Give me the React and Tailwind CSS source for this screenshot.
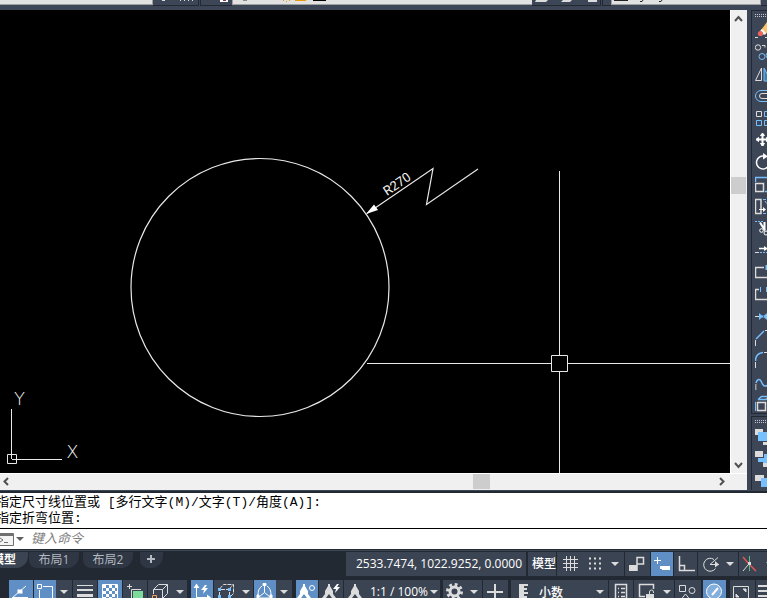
import React from 'react';
import clsx from 'clsx';

const LIGHT = '#dcdcdc';
const BLUE = '#76c0ff';

const Caret = ({ className }) => (
  <svg viewBox="0 0 8 4" className={clsx('h-1 w-2 shrink-0', className)} fill={LIGHT}>
    <path d="M0 0h8L4 4z" />
  </svg>
);

const Grip = () => (
  <svg width="22" height="3" className="ml-[3px] block" fill="#c3c8d0">
    {[0, 2, 4, 6, 8, 10, 12, 14].map(x => (
      <path key={x} d={`M${x} 0h1v1h-1zM${x} 2h1v1h-1z`} />
    ))}
  </svg>
);

const modifyTools = [
  ['删除', <>
    <path d="M0 16.5h3M10 16.5h4" stroke={LIGHT} />
    <path d="M6 9l6-8 5 4-7 9z" fill="#fbc36d" stroke="none" />
    <path d="M5 10l2-2 4 4-2 2z" fill="#fff" stroke="none" />
    <circle cx="5.5" cy="12.5" r="2.6" fill="#f0665c" stroke="none" />
  </>],
  ['复制', <>
    <circle cx="3" cy="4.5" r="2.7" />
    <path d="M7 2.5h3v2M12 2.5h2" />
    <circle cx="7" cy="13.5" r="3" stroke={BLUE} />
    <circle cx="14" cy="12.5" r="3" stroke={BLUE} />
  </>],
  ['镜像', <>
    <path d="M.5 15.5L6.5 3v12.5z" />
    <path d="M9 3v13h7z" stroke={BLUE} fill="#3f7fae" />
  </>],
  ['偏移', <>
    <path d="M20 3.5H6a5.5 5.5 0 000 11h14" stroke={BLUE} />
    <path d="M20 6.5H7a2.5 2.5 0 000 5h13" />
  </>],
  ['阵列', <>
    <path d="M1.5 2.5h5v5h-5z" />
    <path d="M9.5 2.5h5v5h-5zM1.5 11.5h5v5h-5zM9.5 11.5h5v5h-5z" stroke={BLUE} />
  </>],
  ['移动', <g stroke="#fff" fill="#fff">
    <path d="M7.5 3v12M1.5 8.5h12" strokeWidth="2" />
    <path d="M7.5 2l2 2.5h-4zM7.5 15l2-2.5h-4zM1 8.5l2.5-2v4zM14 8.5l-2.5-2v4z" />
  </g>],
  ['旋转', <>
    <path d="M9 3A6.500 6.500 0 1014 12" strokeWidth="1.5" stroke="#fff" />
    <path d="M8 0l5 3.500-5 3z" fill="#fff" stroke="none" />
  </>],
  ['缩放', <>
    <path d="M.5 7V2.500H14M10 16.500h4" stroke={BLUE} strokeWidth="1.5" />
    <path d="M.5 8.500h8v8h-8z" strokeWidth="1.5" />
  </>],
  ['拉伸', <>
    <path d="M.5 2.5h5.500v14H.5z" strokeWidth="1.5" />
    <path d="M8 2.5h6M8 16.5h6M10 4l4 6" stroke={BLUE} strokeDasharray="3 1" />
    <path d="M4 12.5h5" stroke="#fff" />
    <path d="M8 10l3 2.5-3 2.5z" fill="#fff" stroke="none" />
  </>],
  ['修剪', <>
    <path d="M0 2.5h8" stroke={BLUE} strokeDasharray="2 1" />
    <path d="M5 3.5l5 8M9.500 3v8" stroke="#fff" strokeWidth="2" />
    <circle cx="6.500" cy="11.500" r="1.8" stroke="#fff" />
    <circle cx="11" cy="14" r="2" stroke="#fff" />
  </>],
  ['延伸', <>
    <path d="M4 7.5h6" stroke="#fff" strokeWidth="1.5" />
    <path d="M9 5l4 2.5L9 10z" fill="#fff" stroke="none" />
    <path d="M0 11.5h4" />
    <path d="M5 11.5h9" stroke={BLUE} strokeDasharray="2 1" />
  </>],
  ['打断于点', <>
    <path d="M9 4.5H.5v10H14" strokeWidth="1.5" />
    <path d="M11.5 2v5" stroke={BLUE} strokeWidth="2" />
  </>],
  ['打断', <>
    <path d="M4 4.5H.5v10H14" strokeWidth="1.5" />
    <path d="M5.5 2v5M11.5 2v5" stroke={BLUE} />
  </>],
  ['合并', <>
    <path d="M0 9.5h4" />
    <path d="M4 6l4 3.5L4 13zM12 6L8 9.5l4 3.500zM7 8.500h2v2H7z" fill={BLUE} stroke="none" />
  </>],
  ['倒角', <>
    <path d="M.5 17v-6M10 1.5h4" />
    <path d="M1 10l8-8" stroke={BLUE} strokeWidth="1.5" />
  </>],
  ['圆角', <>
    <path d="M.5 17v-6M9 1.5h5" />
    <path d="M.5 10C.5 5 3 2 8 1.5" stroke={BLUE} strokeWidth="1.5" />
  </>],
  ['光顺曲线', <>
    <path d="M.5 17v-6" strokeWidth="2" stroke="#9aa1ab" />
    <path d="M1 10c1-4 4-5 5.5-1s3 5 7 3" stroke={BLUE} strokeWidth="1.5" />
  </>],
  ['分解', <>
    <path d="M.5 7v9" stroke={BLUE} />
    <path d="M3 4.5L6.5 1.5H15M3 4.5h8l3-3" stroke={BLUE} strokeWidth="1.5" />
    <path d="M2.5 7.5h8v8h-8z" strokeWidth="1.5" />
  </>],
];

const orderTools = [
  ['前置', <g stroke="none">
    <path d="M0 2h8v6H0zM8 15h6v3H8z" fill={LIGHT} />
    <path d="M3 5h12v9H3z" fill={BLUE} />
  </g>],
  ['后置', <g stroke="none">
    <path d="M0 2h8v6H0z" fill={LIGHT} />
    <path d="M3 9h6V5h6v13H8v-5H3z" fill={BLUE} />
    <path d="M8 14h6v4H8z" fill={LIGHT} />
  </g>],
  ['置于对象之上', <g stroke="none">
    <path d="M0 4h9v6H0z" fill={LIGHT} />
    <path d="M6 7h9v9H6z" fill={BLUE} />
  </g>],
];

const ToolColumn = ({ tools, className }) => (
  <div className={clsx('overflow-hidden border-l border-t border-[#222933] pt-[3px]', className)}>
    <Grip />
    <div className="mt-[4px] ml-[3px] flex flex-col">
      {tools.map(([name, art]) => (
        <button key={name} aria-label={name} className="h-[22px] w-[22px]">
          <svg width="22" height="22" className="block" fill="none" stroke={LIGHT}>{art}</svg>
        </button>
      ))}
    </div>
  </div>
);

const TopStrip = () => (
  <div className="flex h-[10px] shrink-0 items-start overflow-hidden bg-[#3d4656]">
    <div className="h-[5px] w-[153px] shrink-0 border-r border-b border-[#a0a0a0] bg-[#e1e1e1]" />
    <div className="h-[6px] w-[46px] shrink-0 border-r border-b border-[#222933]">
      <svg width="45" height="5" fill={LIGHT} className="block">
        <path d="M9 0h3v1H9zM27 0h1v1h-1zM31 0h1v1h-1zM35 0h1v1h-1zM39 0h1v1h-1z" />
      </svg>
    </div>
    <div className="ml-px h-[6px] w-[32px] shrink-0 border-b border-l border-[#222933]">
      <svg width="31" height="5" className="block">
        <path d="M19 0h8v2h-8z" fill="#fff" />
        <path d="M22 0h3v1h-3z" fill="#7a3f57" />
      </svg>
    </div>
    <div className="h-[5px] min-w-0 flex-1 border-b border-l border-[#a0a0a0] bg-[#e1e1e1]">
      <svg width="100" height="4" className="block">
        <path d="M10 0h4v1h-4z" fill="#8a8a8a" />
        <path d="M50 0h1v1h-1zM53 1h1v1h-1zM56 0h1v1h-1zM62 0h11v1H62z" fill="#e89a0c" />
        <path d="M80 0h13v1H80z" fill="#000" />
      </svg>
    </div>
    <div className="h-[6px] w-[69px] shrink-0 border-r border-b border-[#222933]">
      <svg width="68" height="5" className="block" fill={LIGHT}>
        <path d="M4 0h12l-2 2H3zM31 0h9l-2 2h-9zM56 0h9v2h-9z" />
      </svg>
    </div>
    <div className="ml-px h-[6px] w-[9px] shrink-0 border-b border-l border-[#222933]" />
    <div className="h-[5px] w-[150px] shrink-0 border-x border-b border-[#a0a0a0] bg-[#e1e1e1]">
      <svg width="80" height="4" className="block" stroke="#222">
        <path d="M2 .5h14M28 1.5h2l1-1.5M47 1.5h2l1-1.5" fill="none" />
      </svg>
    </div>
    <div className="h-[6px] w-[6px] shrink-0 border-b border-[#222933]" />
  </div>
);

const Drawing = () => (
  <div className="min-w-0 flex-1 overflow-hidden bg-black">
    <svg width="730" height="463" viewBox="0 10 730 463" fill="none" stroke="#e8e8e8" className="block">
      <circle cx="260" cy="287.5" r="129" strokeWidth="1.2" />
      <path d="M367 213.5L433 168.5 426.5 204.5 478 169" strokeWidth="1.2" />
      <path d="M366 214L374 204.5 378 210z" fill="#fff" stroke="none" />
      <text x="387" y="196" transform="rotate(-34 387 196)" fill="#f4f4f4" stroke="none" fontSize="13" className="font-['Roboto']">R270</text>
      <path d="M559.5 171v184M559.5 372v101M367 363.5h184M568 363.5h162M551.5 355.5h16v16h-16z" />
      <path d="M11.5 409v50M12 459.5h50M7.5 454.5h9v9h-9z" />
      <g fill="#f4f4f4" stroke="none" fontSize="18" className="font-['DejaVu_Sans'] font-extralight">
        <text x="19.5" y="405" textAnchor="middle">Y</text>
        <text x="72.5" y="458" textAnchor="middle">X</text>
      </g>
    </svg>
  </div>
);

const Chevron = ({ d }) => (
  <svg width="17" height="17" className="block" fill="none" stroke="#505050" strokeWidth="2">
    <path d={d} />
  </svg>
);

const Workspace = () => (
  <div className="flex min-h-0 flex-1 bg-[#3d4656]">
    <div className="flex min-w-0 flex-1 flex-col">
      <div className="flex min-h-0 flex-1">
        <Drawing />
        <div className="flex w-[17px] flex-col border-l border-white bg-[#f0f0f0]">
          <button aria-label="向上滚动" className="-ml-px"><Chevron d="M5 11l3.5-4 3.5 4" /></button>
          <div className="flex flex-1 flex-col">
            <div className="flex-[150]" />
            <div className="h-[17px] w-[15px] bg-[#cdcdcd]" />
            <div className="flex-[262]" />
          </div>
          <button aria-label="向下滚动" className="-ml-px"><Chevron d="M5 7l3.5 4 3.5-4" /></button>
        </div>
      </div>
      <div className="flex h-[17px] border-t border-white bg-[#f0f0f0] pr-[17px]">
        <button aria-label="向左滚动" className="-ml-[2px]"><Chevron d="M10 4L6.5 7.5 10 11" /></button>
        <div className="flex flex-1">
          <div className="flex-[458]" />
          <div className="h-[15px] w-[17px] bg-[#cdcdcd]" />
          <div className="flex-[223]" />
        </div>
        <button aria-label="向右滚动"><Chevron d="M7 4l3.5 3.5L7 11" /></button>
      </div>
    </div>
    <div className="flex w-5 shrink-0 flex-col pl-1">
      <ToolColumn tools={modifyTools} className="h-[404px] border-b" />
      <ToolColumn tools={orderTools} className="mt-[2px] flex-1" />
    </div>
  </div>
);

const CommandLine = () => (
  <div className="shrink-0 border-t border-[#3d4656] bg-white">
    <div className="h-[37px] overflow-hidden border-t-2 border-[#222933] pt-[2px] font-['Liberation_Mono','Noto_Sans_CJK_SC',monospace] text-[13px] leading-4 whitespace-pre text-black">
      <p className="-ml-1">指定尺寸线位置或 [多行文字(M)/文字(T)/角度(A)]:</p>
      <p className="-ml-1">指定折弯位置:</p>
    </div>
    <label className="flex h-[21px] items-center border-t border-black">
      <svg width="14" height="13" className="shrink-0" fill="none" stroke="#707070">
        <path d="M0 .5h13.5v12H0" fill="#f4f4f4" />
        <path d="M0 2h13" strokeWidth="2" />
        <path d="M0 5l3 2-3 2M4 9.5h4" />
      </svg>
      <svg width="8" height="4" className="ml-[2px] shrink-0" fill="#606060"><path d="M0 0h8L4 4z" /></svg>
      <input
        aria-label="命令"
        placeholder="键入命令"
        className="ml-[7px] h-[18px] min-w-0 flex-1 bg-transparent pb-[2px] font-['Noto_Sans_CJK_SC',sans-serif] text-[13px] italic outline-none placeholder:text-[#808080]"
      />
    </label>
  </div>
);

const Icon = ({ w = 22, children, className }) => (
  <svg width={w} height="24" className={clsx('block shrink-0', className)} fill="none" stroke={LIGHT}>
    {children}
  </svg>
);

const Btn = ({ label, on, className, children }) => (
  <button
    aria-label={label}
    aria-pressed={!!on}
    className={clsx('flex h-6 shrink-0 items-start', on ? 'bg-[#5f8fc4]' : 'bg-[#3b4453]', className)}
  >
    {children}
  </button>
);

// toggle with its own drop-down arrow
const SplitBtn = ({ label, on, className, children }) => (
  <Btn label={label} className={className}>
    <span className={clsx('h-6', on && 'bg-[#5f8fc4]')}>{children}</span>
    <Caret className="mx-auto mt-[10px]" />
  </Btn>
);

const TabsAndCoords = () => (
  <div className="flex h-6 items-start font-['Open_Sans','Noto_Sans_CJK_SC',sans-serif] text-xs">
    <nav className="flex min-w-0 flex-1 items-start overflow-hidden leading-4 text-[#b4b9c1]">
      <button className="-ml-2 h-4 w-9 rounded-br-xl bg-[#3b4453] text-left font-bold text-white">模型</button>
      <button className="ml-px h-4 w-[50px] rounded-b-lg rounded-br-xl bg-[#2f3744]">布局1</button>
      <button className="ml-1 h-4 w-[50px] rounded-b-lg rounded-br-xl bg-[#2f3744]">布局2</button>
      <button aria-label="新建布局" className="ml-[7px] h-4 w-[23px] rounded-b-lg rounded-br-xl bg-[#2f3744]">
        <svg width="22" height="16" className="block" stroke="#b4b9c1" strokeWidth="2"><path d="M7 7h8M11 3v8" /></svg>
      </button>
    </nav>
    <div className="flex shrink-0 gap-px">
      <output className="mr-px h-6 w-[180px] bg-[#3b4453] pr-1 text-right leading-6 text-white">2533.7474, 1022.9252, 0.0000</output>
      <button className="h-6 w-7 bg-[#3b4453] pl-1 leading-6 font-medium text-white">模型</button>
      <Btn label="栅格" className="w-[67px]">
        <Icon w="28">
          <path d="M9.5 4v15M13.5 4v15M17.5 4v15M6 7.5h15M6 11.5h15M6 15.5h15" />
        </Icon>
        <Icon w="24">
          <path d="M4 6.5h2M9 6.5h2M14 6.5h2M4 11.5h2M9 11.5h2M14 11.5h2M4 16.5h2M9 16.5h2M14 16.5h2" strokeWidth="2" />
        </Icon>
        <Caret className="mt-[10px] ml-[2px]" />
      </Btn>
      <Btn label="推断约束" className="w-[25px]">
        <Icon>
          <path d="M12 19V5.500h6.500v6.500H12" strokeWidth="1.5" />
          <path d="M4 13h8v6H4z" fill={LIGHT} stroke="none" />
        </Icon>
      </Btn>
      <Btn label="动态输入" on className="w-[22px]">
        <Icon>
          <path d="M3 8.5h7M6.5 5v7" stroke="#fff" />
          <path d="M9 14h10v4H11v-1H9z" fill="#fff" stroke="none" />
        </Icon>
      </Btn>
      <Btn label="正交" className="w-[23px]">
        <Icon><path d="M5.5 4v14.500H21M5.500 13.500h5v5" strokeWidth="1.5" /></Icon>
      </Btn>
      <Btn label="极轴追踪" className="w-10">
        <Icon w="24">
          <path d="M17.5 16.5A6.5 6.5 0 1116 7.5M12 12.5l8-7M12 12.5h9" />
          <path d="M17 9l4 3.5-4 3z" fill={LIGHT} stroke="none" />
        </Icon>
        <Caret className="mt-[10px] ml-1" />
      </Btn>
      <Btn label="等轴测草图" className="w-7">
        <Icon w="28">
          <path d="M4 5l6 7" stroke="#e25555" strokeWidth="1.5" />
          <path d="M10 12l7 7" stroke="#e25555" strokeWidth="1.5" />
          <path d="M4 19l5-6" />
          <path d="M10.5 4v15" stroke="#4fc27d" />
          <path d="M9 10h3v3H9z" fill={LIGHT} stroke="none" />
          <path d="M27 10h6l-3 3z" fill={LIGHT} stroke="none" />
        </Icon>
      </Btn>
    </div>
  </div>
);

const Scale = ({ x = 8, fill = LIGHT }) => (
  <g transform={`translate(${x} 0)`} fill={fill} stroke="none">
    <path d="M-1 4h2v2l3 5v3l3 4h-4l-3-4-3 4h-4l3-4v-3l3-5z" />
  </g>
);

const Bolt = ({ x, y }) => (
  <path d={`M${x + 3} ${y}l-4 5h3l-1 4 5-6h-3l2-3z`} fill="#fff" stroke="none" />
);

const StatusBar = () => (
  <div className="mt-1 flex h-[18px] items-start gap-px overflow-hidden pl-[9px]">
    <Btn label="对象捕捉追踪" on className="w-6">
      <Icon>
        <path d="M3 18L17 6M4 17.5h15" stroke="#fff" />
        <path d="M9 9.5l4 4M9 10h4v3H9z" fill="#fff" stroke="#fff" />
      </Icon>
    </Btn>
    <SplitBtn label="对象捕捉" on className="w-[38px]">
      <Icon>
        <path d="M3.5 4.5h4v4h-4zM9 6.5h9.5V20M5.5 10v10" stroke="#fff" />
      </Icon>
    </SplitBtn>
    <Btn label="线宽" className="w-6">
      <Icon><path d="M4 5h16v1H4zM4 9h16v2H4zM4 14h16v3H4z" fill={LIGHT} stroke="none" /></Icon>
    </Btn>
    <Btn label="透明度" on className="w-6">
      <Icon>
        <path d="M4.5 4.5h15v15h-15z" stroke="#fff" />
        <path d="M5 5h3v3H5zM11 5h3v3h-3zM17 5h3v3h-3zM8 8h3v3H8zM14 8h3v3h-3zM5 11h3v3H5zM11 11h3v3h-3zM17 11h3v3h-3zM8 14h3v3H8zM14 14h3v3h-3zM5 17h3v3H5zM11 17h3v3h-3z" fill="#fff" stroke="none" />
      </Icon>
    </Btn>
    <Btn label="选择循环" className="w-6">
      <Icon>
        <path d="M4 6.5h5M6.5 4v5M8.5 18V9.5H18" />
        <path d="M10 11h10v9H10z" fill="#7ddb9c" stroke="none" />
      </Icon>
    </Btn>
    <SplitBtn label="三维对象捕捉" className="w-[39px]">
      <Icon w="24">
        <path d="M5.5 14V9.5l5-5h9v9l-5 5h-4M5.5 9.5h9v9M14.5 9.5l5-5" />
        <path d="M4.5 15.5h4v4h-4z" stroke="#f5a35c" />
      </Icon>
    </SplitBtn>
    <Btn label="动态 UCS" on className="ml-[3px] w-[22px]">
      <Icon>
        <path d="M5.5 5v12.5H18" stroke="#fff" />
        <path d="M2.5 8l3-4.5 3 4.5zM16 14.5l4 3-4 3z" fill="#fff" stroke="none" />
        <Bolt x={11} y={5} />
      </Icon>
    </Btn>
    <SplitBtn label="选择过滤" className="w-[39px]">
      <Icon w="24">
        <path d="M5.5 9l4-4.5h10v9l-4 4M15 9.5l4-5M7 9.5h7M5.5 12v4M15.5 12v4" strokeDasharray="4 1" />
        <path d="M4 8h3v3H4zM14 8h3v3h-3zM4 15h3v3H4zM14 15h3v3h-3z" fill={BLUE} stroke="none" />
      </Icon>
    </SplitBtn>
    <SplitBtn label="小控件" on className="w-[38px]">
      <Icon>
        <g stroke="#fff">
          <path d="M10.5 4v8.5L5 17M10.5 12.5L16 17M8 6C5 8 4 11 4 15M13 6c3 2 4 5 4 9M6 18h10" />
          <path d="M9 3.5h3v2H9zM3 15h2v3H3zM16 15h2v3h-2z" fill="#fff" />
        </g>
      </Icon>
    </SplitBtn>
    <Btn label="注释可见性" on className="ml-[3px] w-[22px]">
      <Icon>
        <Scale fill="#fff" />
        <circle cx="16" cy="8" r="2.5" stroke="#fff" />
      </Icon>
    </Btn>
    <Btn label="自动缩放" className="w-6">
      <Icon><Scale x={10} /><Bolt x={15} y={4} /></Icon>
    </Btn>
    <Btn label="注释比例" className="w-24 font-['Open_Sans',sans-serif] text-xs leading-6 whitespace-nowrap text-white">
      <Icon><Scale x={11} /></Icon>
      <span className="ml-1 leading-6">1:1 / 100%</span>
      <Caret className="mt-[10px] ml-[2px]" />
    </Btn>
    <SplitBtn label="切换工作空间" className="ml-[2px] w-[39px]">
      <Icon w="23">
        <circle cx="11.5" cy="11.5" r="4.5" strokeWidth="3" />
        <circle cx="11.5" cy="11.5" r="7" strokeWidth="3" strokeDasharray="2.75 2.75" />
      </Icon>
    </SplitBtn>
    <Btn label="注释监视器" className="w-[25px]">
      <Icon><path d="M4 12h16M12 4v16" strokeWidth="2" /></Icon>
    </Btn>
    <label className="ml-[2px] flex h-6 w-[97px] shrink-0 items-start bg-[#3b4453]">
      <Icon w="28">
        <path d="M8 4h9v2h-4v2h3v2h-3v2h4v2h-4v2h3v2h-3v2H8z" fill={LIGHT} stroke="none" />
      </Icon>
      <select aria-label="单位" className="h-6 min-w-0 flex-1 appearance-none bg-transparent font-['Noto_Sans_CJK_SC',sans-serif] text-xs font-medium text-white outline-none">
        <option>小数</option>
      </select>
      <Caret className="mt-[10px] mr-1" />
    </label>
    <Btn label="快捷特性" className="w-6">
      <Icon><path d="M6.5 4.5h11v16h-11zM9 8.5h1M12 8.5h4M9 12.5h1M12 12.5h4M9 16.5h1M12 16.5h4" strokeWidth="1.5" /></Icon>
    </Btn>
    <SplitBtn label="锁定用户界面" className="w-10">
      <Icon w="26">
        <path d="M11 16.5H5.5v-12h14V9" strokeWidth="1.5" />
        <path d="M12 14h8v5h-8z" fill={LIGHT} stroke="none" />
        <path d="M15.5 14v-2a2 2 0 014 0v1" />
      </Icon>
    </SplitBtn>
    <Btn label="隔离对象" className="w-[26px]">
      <Icon w="24">
        <path d="M4.5 5.5h6v6h-6zM6.5 19l4-5 4 5" />
        <circle cx="17" cy="10.5" r="3" />
      </Icon>
    </Btn>
    <Btn label="图形性能" on className="ml-px w-[23px]">
      <Icon>
        <circle cx="11" cy="11.5" r="7.5" fill="#84aedb" stroke="#fff" />
        <path d="M9 15l6-7" stroke="#fff" strokeWidth="2" />
      </Icon>
    </Btn>
    <Btn label="全屏显示" className="ml-[3px] w-[25px]">
      <Icon>
        <path d="M3.5 6.5h15v13h-15z" />
        <path d="M13 9h3v3zM6 14v3h3z" fill={LIGHT} stroke={LIGHT} />
      </Icon>
    </Btn>
    <Btn label="自定义" className="w-6">
      <Icon><path d="M2 6h18M2 11h18M2 16h18" strokeWidth="2" /></Icon>
    </Btn>
  </div>
);

export default function App() {
  return (
    <div className="flex h-screen flex-col overflow-hidden bg-[#222933]">
      <TopStrip />
      <Workspace />
      <CommandLine />
      <footer className="shrink-0 overflow-hidden border-t border-[#222933]">
        <div className="border-t border-[#3d4656] pt-px">
          <TabsAndCoords />
          <StatusBar />
        </div>
      </footer>
    </div>
  );
}
